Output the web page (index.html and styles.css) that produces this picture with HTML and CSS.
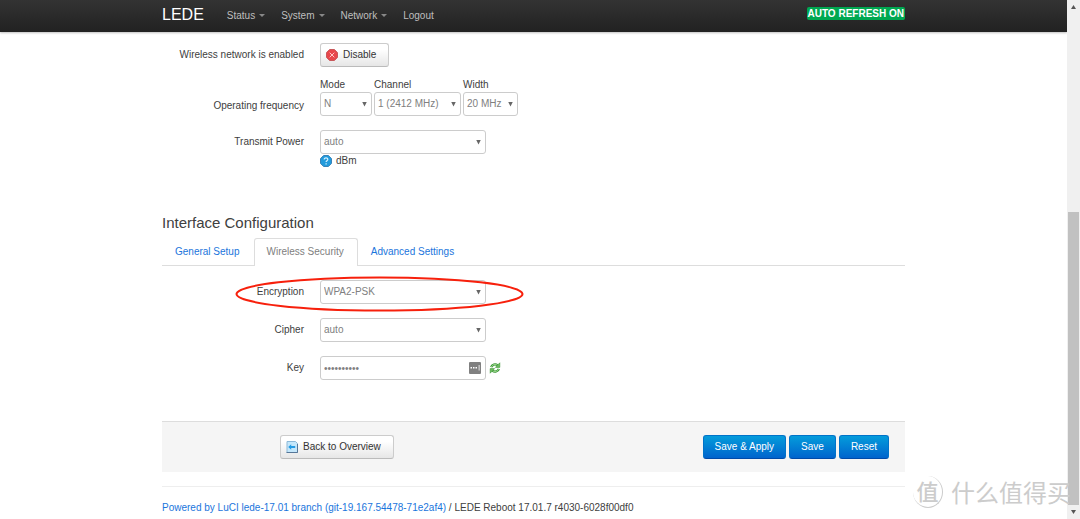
FILE: index.html
```html
<!DOCTYPE html>
<html lang="en">
<head>
<meta charset="utf-8">
<title>LEDE - Wireless</title>
<link rel="stylesheet" href="styles.css">
</head>
<body>
<div class="page">
  <header class="topbar">
    <div class="container topbar-inner">
      <a class="brand" href="#">LEDE</a>
      <nav class="menu">
        <a class="has-caret" href="#">Status</a>
        <a class="has-caret" href="#">System</a>
        <a class="has-caret" href="#">Network</a>
        <a href="#">Logout</a>
      </nav>
      <a class="badge" href="#">AUTO REFRESH ON</a>
    </div>
  </header>

  <main class="container">
    <form>
      <section class="device">
        <div class="row">
          <span class="label">Wireless network is enabled</span>
          <button class="btn" type="button">
            <svg class="icon" viewBox="0 0 12 12" aria-hidden="true"><path d="M3.6.5h4.8l3.1 3.1v4.8l-3.1 3.1H3.6L.5 8.4V3.6z" fill="#e8474b" stroke="#c8585b"/><path d="M3.7 3.7l4.6 4.6M8.3 3.7L3.7 8.3" stroke="#ffc9c9" stroke-width="1"/></svg>
            Disable
          </button>
        </div>
        <div class="row frequency">
          <span class="label">Operating frequency</span>
          <div class="trio">
            <label for="mode">Mode</label>
            <label for="channel">Channel</label>
            <label for="width">Width</label>
            <span class="select"><select id="mode"><option>N</option></select></span>
            <span class="select"><select id="channel"><option>1 (2412 MHz)</option></select></span>
            <span class="select"><select id="width"><option>20 MHz</option></select></span>
          </div>
        </div>
        <div class="row">
          <label class="label" for="power">Transmit Power</label>
          <div class="field">
            <span class="select"><select id="power"><option>auto</option></select></span>
            <span class="hint">
              <svg class="icon" viewBox="0 0 12 12" aria-hidden="true"><path d="M3.6.5h4.8l3.1 3.1v4.8l-3.1 3.1H3.6L.5 8.4V3.6z" fill="#239bdc" stroke="#3b83b8"/><path d="M4.2 4.5c0-2.3 3.7-2.2 3.6 0 0 1.2-1.7 1.2-1.7 2.5M6.1 8.2v1.2" fill="none" stroke="#d9f2ff" stroke-width="1.2"/></svg>
              dBm
            </span>
          </div>
        </div>
      </section>

      <h2>Interface Configuration</h2>
      <nav class="tabs">
        <a href="#">General Setup</a>
        <a class="active" href="#">Wireless Security</a>
        <a href="#">Advanced Settings</a>
      </nav>

      <section class="security">
        <div class="row encryption">
          <label class="label" for="encryption">Encryption</label>
          <div class="field"><span class="select"><select id="encryption"><option>WPA2-PSK</option></select></span></div>
          <svg class="mark" viewBox="0 0 290 36" preserveAspectRatio="none" aria-hidden="true"><ellipse cx="145" cy="18" rx="143.5" ry="16.5" fill="none" stroke="#f7200c" stroke-width="2"/></svg>
        </div>
        <div class="row">
          <label class="label" for="cipher">Cipher</label>
          <div class="field"><span class="select"><select id="cipher"><option>auto</option></select></span></div>
        </div>
        <div class="row">
          <label class="label" for="key">Key</label>
          <div class="field key">
            <input id="key" type="password" value="password12">
            <svg class="manager" viewBox="0 0 12 12" aria-hidden="true"><rect width="12" height="12" rx="1" fill="#808080"/><path d="M1.5 5h1.5v1.5H1.5zM4 5h1.5v1.5H4zM6.5 5H8v1.5H6.5zM9.7 3h.8v5.5h-.8z" fill="#fff"/></svg>
          </div>
          <button class="reveal" type="button" aria-label="Reveal/hide password">
            <svg viewBox="0 0 12 12" aria-hidden="true"><g fill="none"><path d="M2.2 5.2C3 2.4 6.300 1.500 8.700 3.400" stroke="#3c9438" stroke-width="2.400"/><path d="M2.400 5C3.300 2.600 6.300 1.700 8.500 3.200" stroke="#a5e293" stroke-width="1"/><path d="M9.800 6.800C9 9.600 5.700 10.500 3.300 8.600" stroke="#3c9438" stroke-width="2.400"/><path d="M9.600 7C8.700 9.400 5.700 10.300 3.500 8.800" stroke="#a5e293" stroke-width="1"/></g><path d="M10.800.8v4.600H6.400zM1.200 11.200V6.600h4.400z" fill="#6cbd5c" stroke="#3c9438" stroke-width=".6"/></svg>
          </button>
        </div>
      </section>

      <div class="actions">
        <button class="btn back" type="button">
          <svg class="icon" viewBox="0 0 12 12" aria-hidden="true"><path d="M1 .5h8.5l2 2v9H1z" fill="#c4e7fb" stroke="#8db9d8"/><path d="M.5 11.5h11V3" fill="none" stroke="#577798"/><path d="M2.2 6l3-2.7v1.8h4v1.8h-4v1.8z" fill="#259be3"/></svg>
          Back to Overview
        </button>
        <div class="submit">
          <button class="btn primary" type="button">Save &amp; Apply</button>
          <button class="btn primary" type="button">Save</button>
          <button class="btn primary" type="button">Reset</button>
        </div>
      </div>
    </form>

    <footer><a href="#">Powered by LuCI lede-17.01 branch (git-19.167.54478-71e2af4)</a> / LEDE Reboot 17.01.7 r4030-6028f00df0</footer>
  </main>
</div>

<div class="scrollbar" aria-hidden="true">
  <span class="arrow up"></span>
  <span class="space"></span>
  <span class="thumb"></span>
  <span class="arrow down"></span>
</div>

<div class="watermark"><span class="seal">值</span><span>什么值得买</span></div>
</body>
</html>
```

FILE: styles.css
```css
* { box-sizing: border-box; }

body {
  margin: 0;
  min-height: 100vh;
  display: flex;
  background: #fff;
  color: #404040;
  font: 10px/14px "Liberation Sans", Arial, sans-serif;
}

a { color: #1a75dc; text-decoration: none; }
button, input, select { font: inherit; margin: 0; }

.page { flex: 1; min-width: 0; }
.container { max-width: 743px; margin: 0 auto; }

.topbar {
  background: linear-gradient(#333, #222);
  border-bottom: 1px solid #222;
  box-shadow: 0 1px 2px rgba(0, 0, 0, .25);
}
.topbar-inner { display: flex; align-items: center; height: 31px; }
.brand { color: #fff; font-size: 16px; line-height: 20px; margin: 0 23px 2px 0; }
.menu { display: flex; gap: 16px; }
.menu a { color: #bfbfbf; }
.has-caret::after {
  content: "";
  display: inline-block;
  margin-left: 4px;
  vertical-align: 2px;
  border: 3px solid transparent;
  border-top-color: #888;
  border-bottom: 0;
}
.badge {
  margin: 0 0 4px auto;
  padding: 0 1px;
  border-radius: 2px;
  background: #00a851;
  color: #fff;
  font-weight: bold;
  line-height: 13px;
}

.row { display: flex; gap: 16px; min-height: 24px; }
.label { width: 142px; text-align: right; padding-top: 5px; }
.device { display: flex; flex-direction: column; gap: 14px; padding-top: 11px; }
.frequency { margin-top: -1px; }
.frequency .label { padding-top: 19px; }
.trio { display: grid; grid-template-columns: 52px 87px 55px; column-gap: 2px; grid-template-rows: 12px 24px; align-items: end; }
.field { width: 166px; }

.btn {
  display: inline-flex;
  align-items: center;
  gap: 5px;
  height: 24px;
  padding: 0 12px 0 5px;
  border: 1px solid #ccc;
  border-bottom-color: #bbb;
  border-radius: 3px;
  background: linear-gradient(#fff 25%, #e6e6e6);
  color: #333;
}
.icon { width: 12px; height: 12px; flex: none; }
.primary {
  padding: 0 11px;
  border-color: #0073c9 #0073c9 #004aa8;
  background: linear-gradient(#049cdb, #0064cd);
  color: #fff;
}

.select { display: grid; align-items: center; }
.select::after {
  content: "";
  grid-area: 1 / 1;
  justify-self: end;
  width: 5px;
  height: 5px;
  margin-right: 5px;
  background: #666;
  clip-path: polygon(0 0, 100% 0, 50% 100%);
  pointer-events: none;
}
select, input {
  grid-area: 1 / 1;
  width: 100%;
  height: 24px;
  padding: 0 3px;
  border: 1px solid #ccc;
  border-radius: 3px;
  background: #fff;
  color: #808080;
  appearance: none;
}
.hint { display: flex; gap: 4px; align-items: center; }

h2 { margin: 43px 0 3px; font-size: 15px; line-height: 24px; font-weight: normal; }

.tabs { display: flex; border-bottom: 1px solid #ddd; }
.tabs a {
  margin-bottom: -1px;
  padding: 6px 13px 7px 12px;
  border: 1px solid transparent;
  border-bottom: 0;
  border-radius: 3px 3px 0 0;
}
.tabs .active { border-color: #ddd; background: #fff; color: #808080; }

.security { display: flex; flex-direction: column; gap: 14px; padding: 14px 0 41px; }
.encryption { position: relative; }
.mark { position: absolute; left: 73px; top: -4px; width: 289px; height: 36px; }
.key { display: grid; align-items: center; }
.manager { grid-area: 1 / 1; justify-self: end; width: 12px; height: 12px; margin-right: 5px; }
.reveal { align-self: center; width: 12px; height: 12px; margin-left: -13px; padding: 0; border: 0; background: none; }
.reveal svg { display: block; width: 12px; height: 12px; }

.actions {
  display: flex;
  justify-content: space-between;
  align-items: center;
  height: 51px;
  padding: 0 16px 0 118px;
  border-top: 1px solid #ddd;
  background: #f5f5f5;
}
.submit { display: flex; gap: 3px; }

footer { margin-top: 14px; padding-top: 14px; border-top: 1px solid #eee; }

.scrollbar { width: 13px; display: flex; flex-direction: column; align-items: center; background: #f0f0f0; }
.arrow { width: 5px; height: 4px; margin: 5px 0; background: #555; }
.up { clip-path: polygon(50% 0, 100% 100%, 0 100%); }
.down { clip-path: polygon(0 0, 100% 0, 50% 100%); }
.space { flex: 198; }
.thumb { flex: 293; width: 11px; background: #c1c1c1; }

.watermark {
  position: absolute;
  right: 9px;
  bottom: 11px;
  display: flex;
  align-items: center;
  gap: 8px;
  color: #ccc;
  font: 24px/32px "Noto Sans CJK SC", sans-serif;
}
.seal { width: 30px; height: 32px; border-right: 1px solid #ccc; border-bottom: 1px solid #ccc; border-radius: 50%; text-align: center; font-size: 22px; line-height: 29px; font-weight: 500; }
```
